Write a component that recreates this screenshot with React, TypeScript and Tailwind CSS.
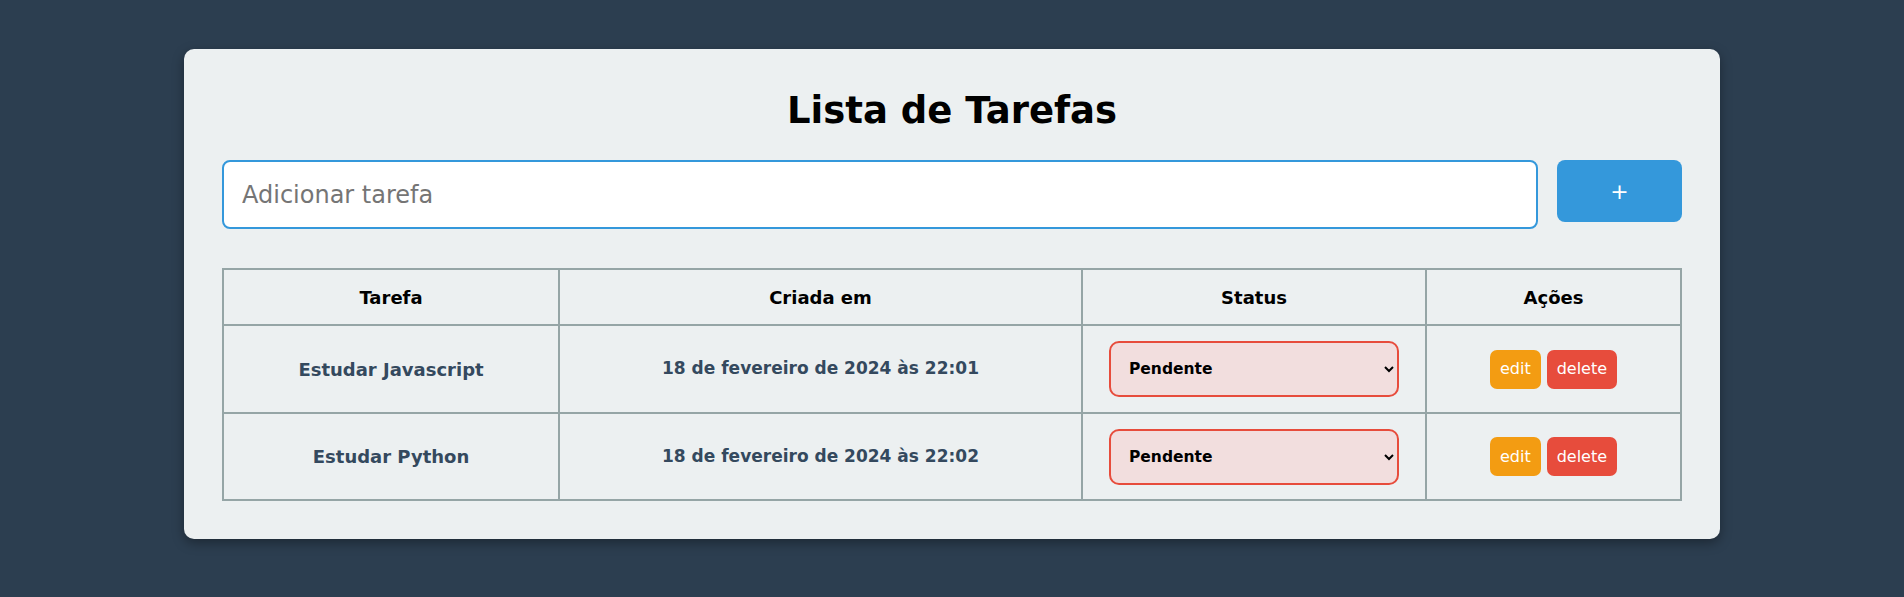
import React from "react";

const rows = [
  { task: "Estudar Javascript", date: "18 de fevereiro de 2024 às 22:01" },
  { task: "Estudar Python", date: "18 de fevereiro de 2024 às 22:02" },
];

export default function App() {
  return (
    <div className="min-h-[597px] bg-[#2c3e50] pt-[49px] font-['DejaVu_Sans','Inter',sans-serif]">
      <div className="mx-auto w-[1536px] rounded-[10px] bg-[#ecf0f1] px-[38px] pt-[34px] pb-[38px] shadow-[0_4px_12px_rgba(0,0,0,0.35)]">
        <h1 className="text-center text-[37px] leading-[55px] font-bold text-black">Lista de Tarefas</h1>
        <div className="mt-[22px] flex items-start gap-[19px]">
          <input
            placeholder="Adicionar tarefa"
            className="h-[69px] flex-1 rounded-[8px] border-2 border-[#3498db] bg-white px-[18px] text-[24px] text-black outline-none placeholder:text-[#757575]"
          />
          <button className="h-[62px] w-[125px] rounded-[8px] bg-[#3498db] text-[22px] text-white">+</button>
        </div>
        <table className="mt-[39px] w-full table-fixed border-collapse border-2 border-[#95a5a6]">
          <colgroup>
            <col className="w-[336px]" />
            <col className="w-[523px]" />
            <col className="w-[344px]" />
            <col />
          </colgroup>
          <thead>
            <tr>
              {["Tarefa", "Criada em", "Status", "Ações"].map((h) => (
                <th key={h} className="h-[56px] border-2 border-[#95a5a6] text-center text-[18px] font-bold text-black">
                  {h}
                </th>
              ))}
            </tr>
          </thead>
          <tbody>
            {rows.map((r, i) => (
              <tr key={r.task}>
                <td className={`${i === 0 ? "h-[88px]" : "h-[87px]"} border-2 border-[#95a5a6] text-center text-[18px] font-bold text-[#34495e]`}>
                  {r.task}
                </td>
                <td className="border-2 border-[#95a5a6] text-center text-[17px] font-bold text-[#34495e]">{r.date}</td>
                <td className="border-2 border-[#95a5a6] text-center">
                  <select className="h-[56px] w-[290px] rounded-[10px] border-2 border-[#e74c3c] bg-[#f2dede] px-[14px] text-[15.5px] font-bold text-black">
                    <option>Pendente</option>
                    <option>Concluída</option>
                  </select>
                </td>
                <td className="border-2 border-[#95a5a6] text-center">
                  <div className="flex items-center justify-center gap-[6px]">
                    <button className="h-[39px] rounded-[7px] bg-[#f39c12] px-[10px] text-[16px] font-normal text-white">edit</button>
                    <button className="h-[39px] rounded-[7px] bg-[#e74c3c] px-[10px] text-[16px] font-normal text-white">delete</button>
                  </div>
                </td>
              </tr>
            ))}
          </tbody>
        </table>
      </div>
    </div>
  );
}
